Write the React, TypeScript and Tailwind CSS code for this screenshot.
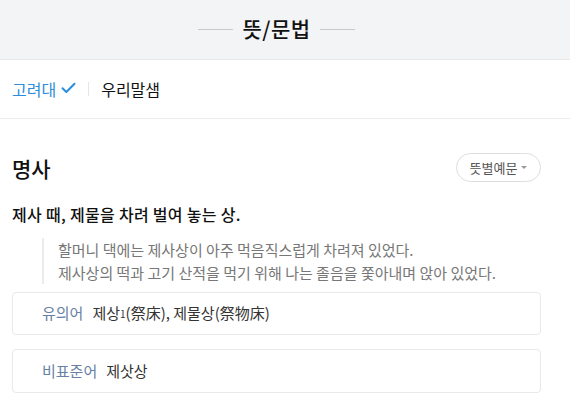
import React from 'react';

const font = { fontFamily: '"Noto Sans CJK KR", "Noto Sans", sans-serif' };

function CheckIcon() {
  return (
    <svg width="15" height="12" viewBox="0 0 15 12" fill="none" className="ml-[5px] mb-[3px]">
      <path d="M1.5 6.2 L5.4 10 L13.5 1.8" stroke="#2b8ddb" strokeWidth="2" strokeLinecap="round" strokeLinejoin="round" />
    </svg>
  );
}

export default function App() {
  return (
    <div className="w-[570px] h-[414px] bg-white overflow-hidden" style={font}>
      <div className="h-[60px] bg-[#f3f4f6] border-b border-[#e8e9eb] flex items-center justify-center gap-[9px] pr-[17px]">
        <span className="w-[35px] h-px bg-[#c9c9c9]" />
        <h1 className="text-[21px] font-medium text-[#111] leading-none pb-[2px] tracking-[0.5px]">뜻/문법</h1>
        <span className="w-[35px] h-px bg-[#c9c9c9]" />
      </div>

      <div className="h-[59px] border-b border-[#ececec] flex items-center px-[12px]">
        <span className="flex items-center text-[16px] text-[#2b8ddb]">
          고려대
          <CheckIcon />
        </span>
        <span className="w-px h-[14px] bg-[#e6e6e6] ml-[12px] mr-[12px]" />
        <span className="text-[16px] text-[#111]">우리말샘</span>
      </div>

      <div className="pl-[12px] pr-[29px]">
        <div className="flex items-center justify-between pt-[34px]">
          <h2 className="text-[21px] font-medium text-[#111] leading-none pt-[2px]">명사</h2>
          <button className="w-[85px] h-[29px] rounded-full border border-[#dedede] flex items-center justify-center gap-[4px] text-[13px] text-[#555]">
            뜻별예문
            <span className="w-0 h-0 border-l-[3px] border-r-[3px] border-t-[3px] border-l-transparent border-r-transparent border-t-[#999]" />
          </button>
        </div>

        <p className="mt-[22px] text-[16px] font-medium text-[#111] leading-[20px] tracking-[0.3px]">제사 때, 제물을 차려 벌여 놓는 상.</p>

        <div className="mt-[14px] ml-[30px] border-l-2 border-[#ebebeb] pl-[14px] text-[15px] text-[#777] leading-[23px]">
          <p>할머니 댁에는 제사상이 아주 먹음직스럽게 차려져 있었다.</p>
          <p>제사상의 떡과 고기 산적을 먹기 위해 나는 졸음을 쫓아내며 앉아 있었다.</p>
        </div>

        <div className="mt-[8px] flex flex-col gap-[14px]">
          <div className="h-[43px] rounded border border-[#e9e9e9] flex items-center pl-[29px] text-[15px]">
            <span className="text-[#6781a5] mr-[9px]">유의어</span>
            <span className="text-[#333]">
              제상<sup className="text-[10px] relative -top-[1px]">1</sup>(祭床), 제물상(祭物床)
            </span>
          </div>
          <div className="h-[44px] rounded border border-[#e9e9e9] flex items-center pl-[29px] text-[15px]">
            <span className="text-[#6781a5] mr-[9px]">비표준어</span>
            <span className="text-[#333]">제삿상</span>
          </div>
        </div>
      </div>
    </div>
  );
}
